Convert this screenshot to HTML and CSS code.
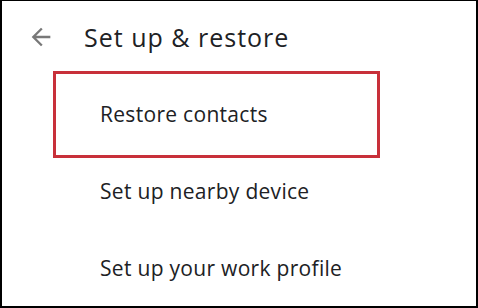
FILE: index.html
```html
<!DOCTYPE html>
<html lang="en">
<head>
<meta charset="utf-8">
<title>Set up &amp; restore</title>
<link rel="stylesheet" href="styles.css">
</head>
<body>
<div class="screen">
  <header class="header">
    <svg class="back" viewBox="0 0 24 24" width="28" height="28" aria-hidden="true">
      <path d="M20 11H7.83l5.59-5.59L12 4l-8 8 8 8 1.41-1.41L7.83 13H20v-2z"/>
    </svg>
    <h1 class="title">Set up &amp; restore</h1>
  </header>
  <ul class="list">
    <li class="item">Restore contacts</li>
    <li class="item">Set up nearby device</li>
    <li class="item">Set up your work profile</li>
  </ul>
  <div class="highlight"></div>
</div>
</body>
</html>
```

FILE: styles.css
```css
html, body {
  margin: 0;
  padding: 0;
  background: #fff;
}

.screen {
  position: relative;
  width: 478px;
  height: 308px;
  box-sizing: border-box;
  border-style: solid;
  border-color: #000;
  border-width: 1px 2px 2px 2px;
  background: #fff;
  font-family: "Open Sans", Roboto, sans-serif;
  color: #202124;
  display: flex;
  flex-direction: column;
  overflow: hidden;
}

.header {
  display: flex;
  align-items: flex-start;
  height: 77px;
  box-sizing: border-box;
  padding: 22px 0 0 25px;
}

.back {
  fill: #787878;
  flex: none;
}

.title {
  margin: 0 0 0 29px;
  font-size: 25px;
  line-height: 28px;
  letter-spacing: 1px;
  font-weight: 400;
}

.list {
  list-style: none;
  margin: 0;
  padding: 0;
}

.item {
  height: 77px;
  display: flex;
  align-items: center;
  padding-left: 98px;
  font-size: 21px;
  line-height: 24px;
  letter-spacing: 0.3px;
}

.highlight {
  position: absolute;
  left: 51px;
  top: 70px;
  width: 327px;
  height: 87px;
  box-sizing: border-box;
  border: 3px solid #c8303a;
}
```
